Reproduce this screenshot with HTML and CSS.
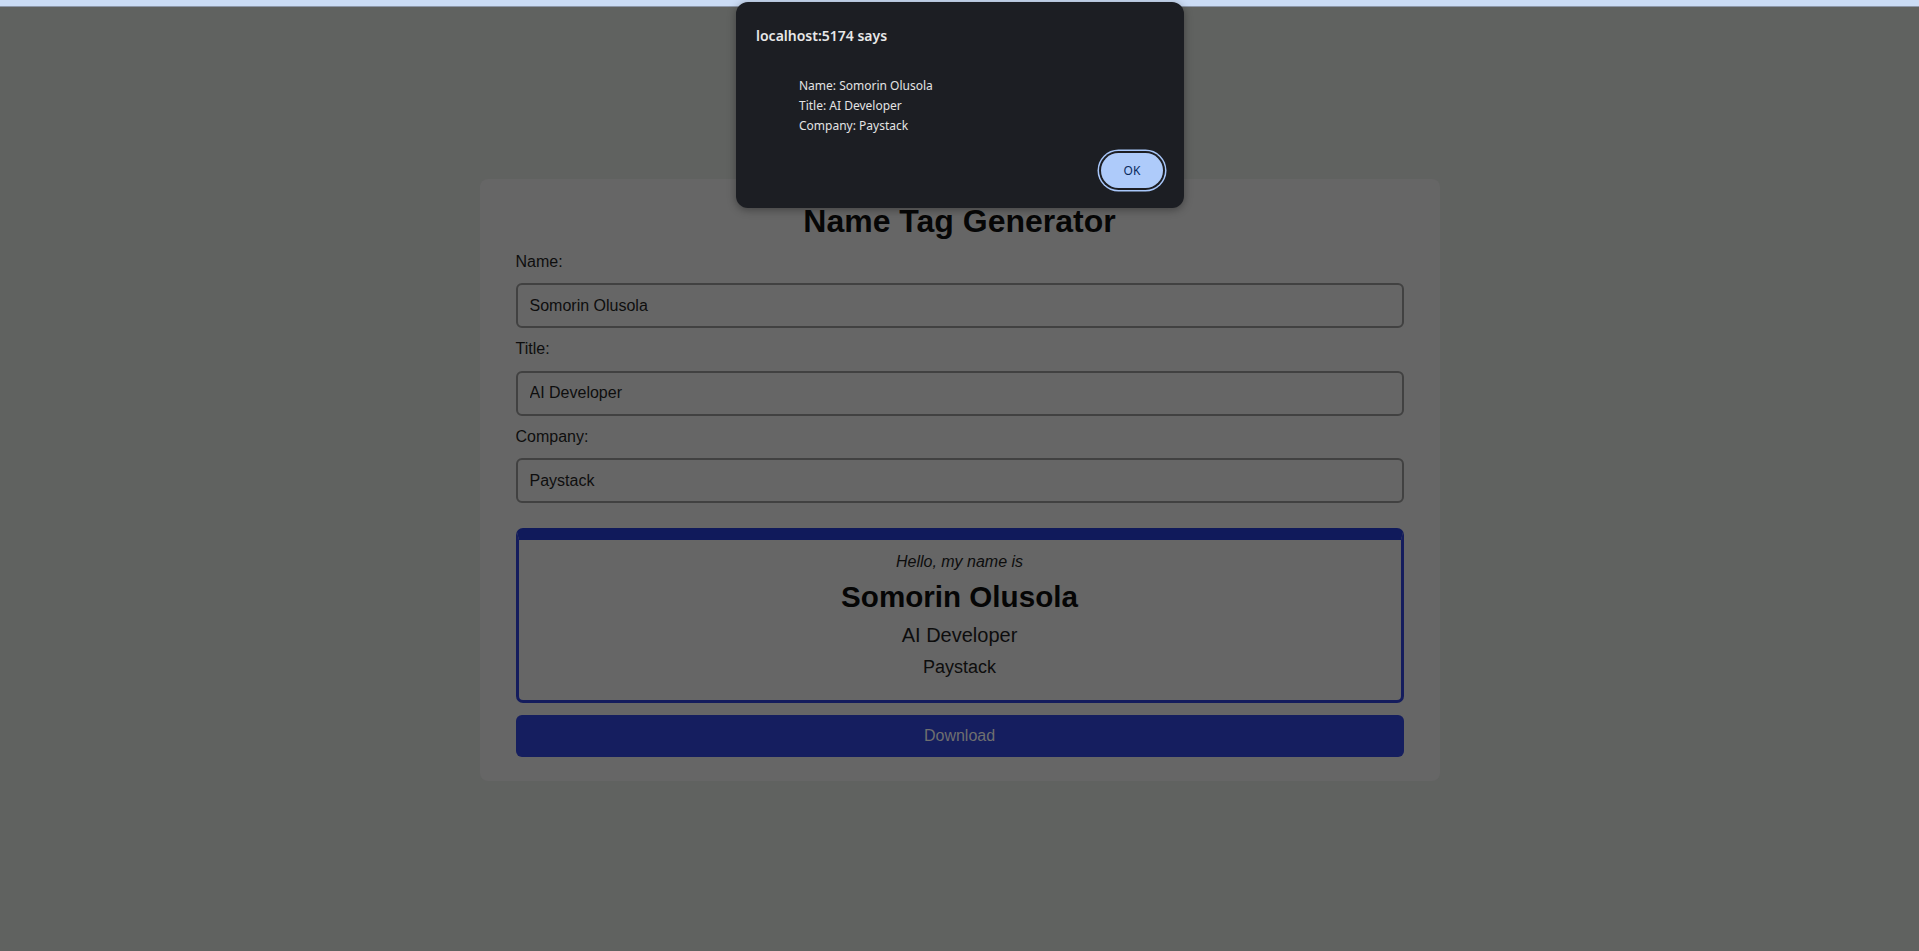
FILE: index.html
```html
<!DOCTYPE html>
<html lang="en">
<head>
<meta charset="utf-8">
<title>Name Tag Generator</title>
<link rel="stylesheet" href="styles.css">
</head>
<body>
<div class="topbar"></div>
<main class="page">
  <section class="card">
    <h1 class="heading">Name Tag Generator</h1>
    <label class="label" for="name">Name:</label>
    <input class="field" id="name" type="text" value="Somorin Olusola">
    <label class="label" for="title">Title:</label>
    <input class="field" id="title" type="text" value="AI Developer">
    <label class="label" for="company">Company:</label>
    <input class="field" id="company" type="text" value="Paystack">
    <div class="tag">
      <p class="tag-hello">Hello, my name is</p>
      <p class="tag-name">Somorin Olusola</p>
      <p class="tag-title">AI Developer</p>
      <p class="tag-company">Paystack</p>
    </div>
    <button class="download" type="button">Download</button>
  </section>
</main>
<div class="dialog" role="alertdialog">
  <div class="dialog-title">localhost:5174 says</div>
  <div class="dialog-msg">
    <div>Name: Somorin Olusola</div>
    <div>Title: AI Developer</div>
    <div>Company: Paystack</div>
  </div>
  <div class="dialog-actions">
    <button class="ok" type="button">OK</button>
  </div>
</div>
</body>
</html>
```
FILE: styles.css
```css
html, body {
  margin: 0;
  padding: 0;
}
body {
  background: #606260;
  font-family: "Liberation Sans", Arial, sans-serif;
  color: #0d0d0d;
  min-height: 951px;
  overflow: hidden;
}
.topbar {
  height: 6px;
  background: #cbdcf5;
  border-bottom: 1px solid #8d97a9;
}
.page {
  padding-top: 172px;
}
.card {
  width: 960px;
  box-sizing: border-box;
  margin: 0 auto;
  background: #666666;
  border-radius: 8px;
  padding: 25px 36px 24px;
  display: flex;
  flex-direction: column;
  gap: 12px;
}
.heading {
  margin: -1px 0 1px;
  font-size: 32px;
  line-height: 36.8px;
  font-weight: bold;
  text-align: center;
  color: #060606;
}
.label {
  font-size: 16px;
  line-height: 18.4px;
  color: #0e0e0e;
}
.field {
  box-sizing: border-box;
  height: 45px;
  width: 100%;
  margin: 0;
  padding: 0 12px;
  border: 2px solid #414141;
  border-radius: 6px;
  background: #666666;
  font-family: "Liberation Sans", Arial, sans-serif;
  font-size: 16px;
  color: #0e0e0e;
  outline: none;
}
.tag {
  margin-top: 13px;
  height: 175px;
  box-sizing: border-box;
  border: 3px solid #141c5d;
  border-top: 12px solid #101a5b;
  border-radius: 7px;
  padding: 13px 20px 0;
  text-align: center;
}
.tag p {
  margin: 0;
}
.tag-hello {
  font-size: 16px;
  line-height: 18.4px;
  font-style: italic;
  margin-bottom: 9px !important;
}
.tag-name {
  font-size: 29.6px;
  line-height: 34px;
  font-weight: bold;
  color: #050505;
  margin-bottom: 10px !important;
}
.tag-title {
  font-size: 20px;
  line-height: 23px;
  margin-bottom: 10px !important;
}
.tag-company {
  font-size: 18px;
  line-height: 20.7px;
}
.download {
  height: 42px;
  width: 100%;
  border: none;
  border-radius: 6px;
  background: #151e5f;
  color: #6f6f6f;
  font-family: "Liberation Sans", Arial, sans-serif;
  font-size: 16px;
  padding: 0;
}
.dialog {
  position: absolute;
  left: 736px;
  top: 2px;
  width: 448px;
  height: 206px;
  box-sizing: border-box;
  background: #1c1e23;
  border-radius: 12px;
  box-shadow: 0 2px 8px rgba(0, 0, 0, 0.35);
  padding: 25px 17px 16px 20px;
  font-family: "Noto Sans", "Open Sans", sans-serif;
  color: #e3e3e3;
  display: flex;
  flex-direction: column;
}
.dialog-title {
  font-size: 14px;
  font-weight: 600;
  line-height: 18px;
  color: #e8e8e8;
}
.dialog-msg {
  margin-top: 31px;
  padding-left: 43px;
  font-size: 12px;
  line-height: 20px;
}
.dialog-actions {
  margin-top: auto;
  display: flex;
  justify-content: flex-end;
}
.ok {
  width: 62px;
  height: 35px;
  margin: 4px;
  border: none;
  border-radius: 18px;
  background: #aecbfa;
  color: #0a2a5c;
  font-family: "Noto Sans", "Open Sans", sans-serif;
  font-size: 12px;
  box-shadow: 0 0 0 2px #1c1e23, 0 0 0 3.5px #a8c7fa;
  padding: 0;
}
```
